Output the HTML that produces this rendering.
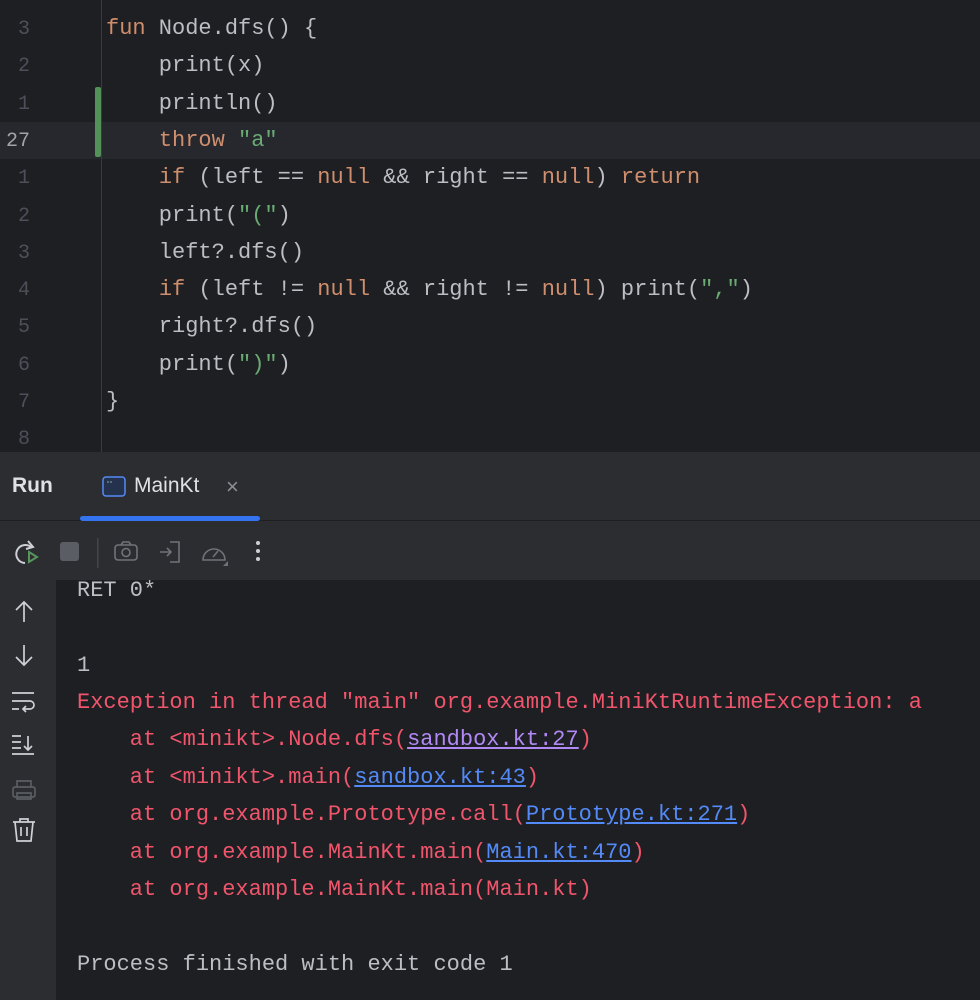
<!DOCTYPE html>
<html><head><style>
body{margin:0;width:980px;height:1000px;background:#1e1f22;position:relative;overflow:hidden;font-family:"Liberation Mono",monospace;}
.ln{position:absolute;left:0;width:30px;text-align:right;color:#4b5059;font-size:20px;}
.code{position:absolute;left:106px;color:#bcbec4;font-size:22px;white-space:pre;}
.k{color:#cf8e6d}.s{color:#6aab73}
.con{position:absolute;left:77px;font-size:22px;white-space:pre;color:#bcbec4}
.e{color:#f0556c}
.l{color:#548af7;text-decoration:underline}
.v{color:#b189f5;text-decoration:underline}
</style></head><body>
<div style="position:absolute;left:0;top:122px;width:980px;height:37px;background:#26282e"></div>
<div style="position:absolute;left:101px;top:0;width:1px;height:452px;background:#393b40"></div>
<div style="position:absolute;left:95px;top:87px;width:6px;height:70px;background:#549159;border-radius:2px"></div>
<div id="ed"></div>
<script>
var ln=["3","2","1","27","1","2","3","4","5","6","7","8"];
var code=['<span class="k">fun</span> Node.dfs() {','    print(x)','    println()','    <span class="k">throw</span> <span class="s">"a"</span>','    <span class="k">if</span> (left == <span class="k">null</span> &amp;&amp; right == <span class="k">null</span>) <span class="k">return</span>','    print(<span class="s">"("</span>)','    left?.dfs()','    <span class="k">if</span> (left != <span class="k">null</span> &amp;&amp; right != <span class="k">null</span>) print(<span class="s">","</span>)','    right?.dfs()','    print(<span class="s">")"</span>)','}',''];
var h='';
for(var i=0;i<12;i++){var t=16+i*37.3;
h+='<div class="ln" style="top:'+(t+2)+'px;'+(i==3?'color:#a1a3ab':'')+'">'+ln[i]+'</div>';
h+='<div class="code" style="top:'+t+'px">'+code[i]+'</div>';}
document.getElementById('ed').innerHTML=h;
</script>
<div style="position:absolute;left:0;top:452px;width:980px;height:128px;background:#2b2d30"></div>
<div style="position:absolute;left:0;top:520px;width:980px;height:1px;background:#1e1f22"></div>
<div style="position:absolute;left:12px;top:474px;font-family:'Liberation Sans',sans-serif;font-weight:bold;font-size:21px;color:#dfe1e5">Run</div>
<svg style="position:absolute;left:102px;top:476px" width="24" height="22"><rect x="1" y="1" width="22" height="19" rx="3" fill="#25324d" stroke="#548af7" stroke-width="1.5"/><path d="M5 6h2M8 6h2" stroke="#8aa" stroke-width="1"/></svg>
<div style="position:absolute;left:134px;top:474px;font-family:'Liberation Sans',sans-serif;font-size:21px;color:#dfe1e5">MainKt</div>
<div style="position:absolute;left:226px;top:474px;font-family:'Liberation Sans',sans-serif;font-size:22px;color:#8c8f94">×</div>
<div style="position:absolute;left:80px;top:516px;width:180px;height:5px;background:#3574f0;border-radius:3px"></div>
<svg style="position:absolute;left:12px;top:538px" width="260" height="30">
<path d="M20 10a9 9 0 1 0-7 15" fill="none" stroke="#ced0d6" stroke-width="2"/><path d="M16 3l5 6-7 2" fill="none" stroke="#ced0d6" stroke-width="2"/>
<path d="M17 14l8 5-8 5z" fill="none" stroke="#57965c" stroke-width="2"/>
<rect x="48" y="4" width="19" height="19" rx="3" fill="#5a5d63"/>
<rect x="85" y="0" width="1.5" height="30" fill="#43454a"/>
<rect x="103" y="7" width="22" height="15" rx="3" fill="none" stroke="#6f737a" stroke-width="1.6"/><circle cx="114" cy="14.5" r="4" fill="none" stroke="#6f737a" stroke-width="1.6"/><path d="M109 7l2-3h6l2 3" fill="none" stroke="#6f737a" stroke-width="1.6"/>
<path d="M158 4h9v20h-9M148 14h11M155 10l4 4-4 4" fill="none" stroke="#6f737a" stroke-width="1.6"/>
<path d="M191 22a11 11 0 1 1 22 0z" fill="none" stroke="#6f737a" stroke-width="1.6"/><path d="M201 19l5-6" stroke="#6f737a" stroke-width="1.6"/><path d="M216 28l-5 0 5-5z" fill="#6f737a"/>
<circle cx="246" cy="5" r="2" fill="#ced0d6"/><circle cx="246" cy="13" r="2" fill="#ced0d6"/><circle cx="246" cy="21" r="2" fill="#ced0d6"/>
</svg>
<div style="position:absolute;left:0;top:580px;width:56px;height:420px;background:#2b2d30"></div>
<svg style="position:absolute;left:10px;top:600px" width="30" height="250" fill="none" stroke="#ced0d6" stroke-width="1.7">
<path d="M14 2v20M6 10l8-8 8 8"/>
<path d="M14 45v20M6 57l8 8 8-8"/>
<path d="M2 93h22M2 101h18a4 4 0 0 1 0 8h-6M16 106l-3 3 3 3M2 109h7"/>
<path d="M2 136h9M2 142h9M2 148h9M2 154h22M18 136v14M14 146l4 4 4-4"/>
<g stroke="#5a5d63"><rect x="3" y="187" width="22" height="10" rx="2"/><path d="M7 187v-6h14v6M7 193h14v6H7z"/></g>
<path d="M3 222h22M10 222v-3h8v3M5 222l2 19h14l2-19M11 227v9M17 227v9"/>
</svg>
<div class="con" style="top:578px">RET 0*</div>
<div class="con" style="top:653px">1</div>
<div class="con e" style="top:690px">Exception in thread "main" org.example.MiniKtRuntimeException: a</div>
<div class="con e" style="top:727px">    at &lt;minikt&gt;.Node.dfs(<span class="v">sandbox.kt:27</span>)</div>
<div class="con e" style="top:765px">    at &lt;minikt&gt;.main(<span class="l">sandbox.kt:43</span>)</div>
<div class="con e" style="top:802px">    at org.example.Prototype.call(<span class="l">Prototype.kt:271</span>)</div>
<div class="con e" style="top:840px">    at org.example.MainKt.main(<span class="l">Main.kt:470</span>)</div>
<div class="con e" style="top:877px">    at org.example.MainKt.main(Main.kt)</div>
<div class="con" style="top:952px">Process finished with exit code 1</div>
</body></html>
